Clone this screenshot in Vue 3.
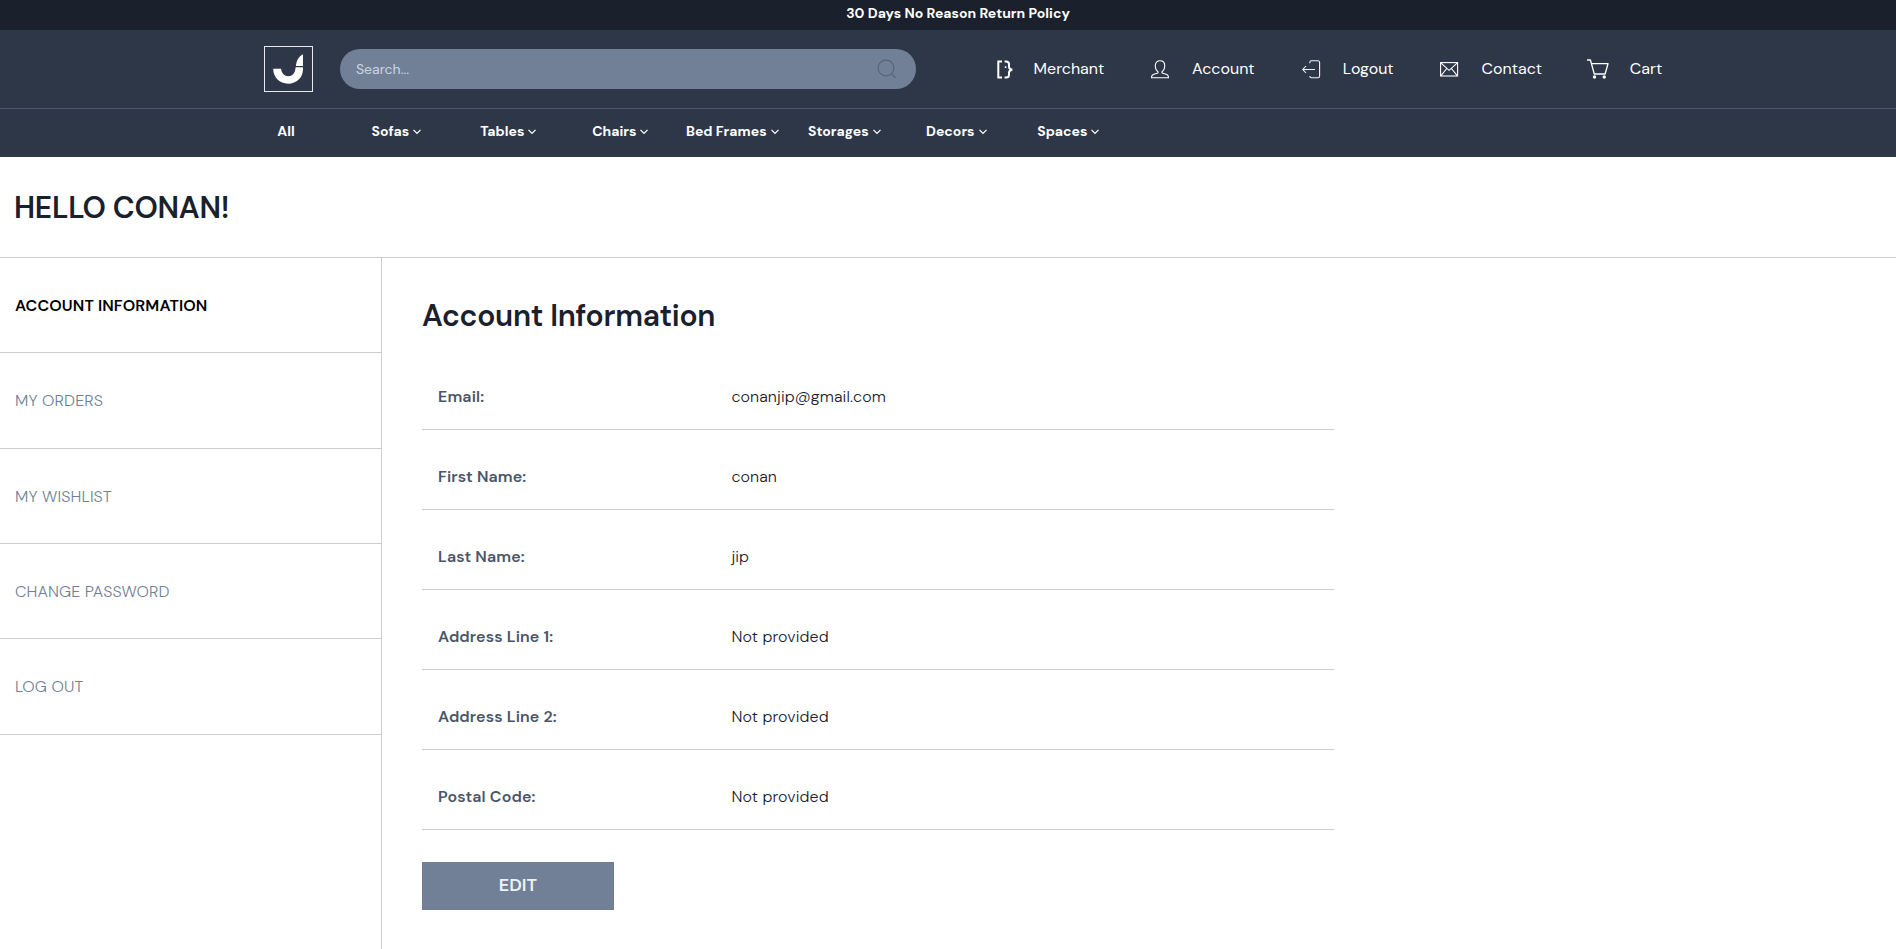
<script setup>
const categories = [
  { name: 'All', menu: false },
  { name: 'Sofas', menu: true },
  { name: 'Tables', menu: true },
  { name: 'Chairs', menu: true },
  { name: 'Bed Frames', menu: true },
  { name: 'Storages', menu: true },
  { name: 'Decors', menu: true },
  { name: 'Spaces', menu: true },
]

const links = [
  { name: 'Merchant', icon: 'merchant' },
  { name: 'Account', icon: 'account' },
  { name: 'Logout', icon: 'logout' },
  { name: 'Contact', icon: 'contact' },
  { name: 'Cart', icon: 'cart' },
]

const sections = [
  { name: 'ACCOUNT INFORMATION', active: true },
  { name: 'MY ORDERS' },
  { name: 'MY WISHLIST' },
  { name: 'CHANGE PASSWORD' },
  { name: 'LOG OUT' },
]

const fields = [
  { label: 'Email:', value: 'conanjip@gmail.com' },
  { label: 'First Name:', value: 'conan' },
  { label: 'Last Name:', value: 'jip' },
  { label: 'Address Line 1:', value: 'Not provided' },
  { label: 'Address Line 2:', value: 'Not provided' },
  { label: 'Postal Code:', value: 'Not provided' },
]
</script>

<template>
  <div class="page">
    <div class="promo">30 Days No Reason Return Policy</div>

    <header class="header">
      <div class="toolbar">
        <svg class="logo" width="49" height="46" viewBox="0 0 49 46">
          <rect x=".5" y=".5" width="48" height="45" fill="none" stroke="#e6e9ee" />
          <path fill="#fff" d="M9.2 22.8H17C17.5 27.3 20.5 30.3 24.3 30.3C28.3 30.3 31.2 27.2 31.6 21.3H39V23C39 31.5 32.6 37.7 24.2 37.7C15.7 37.7 9.2 31.5 9.2 22.8Z" />
          <path fill="#fff" d="M32 20C32.2 14.8 34.3 10.9 39 8.2V20Z" />
        </svg>

        <div class="search">
          <span>Search...</span>
          <svg width="20" height="20" viewBox="0 0 20 20" fill="none" stroke="#566379" stroke-width="1.1">
            <circle cx="9" cy="9" r="7.9" />
            <path d="M14.6 14.7L18.6 18.8" />
          </svg>
        </div>

        <nav class="links">
          <a v-for="link in links" :key="link.name" class="link" :class="link.icon">
            <svg v-if="link.icon === 'merchant'" width="16" height="19" viewBox="0 0 16 19" fill="none" stroke="#fff" stroke-width="2">
              <path d="M5 1.4H1.3V17.6H5" />
              <path d="M7.6 1.4H9Q12 1.4 12 4V6.8Q12 9.4 15.3 9.8Q12 10.2 12 12.8V15Q12 17.6 9 17.6H7.6" />
              <path d="M8.6 6.3V8" stroke-width="1.6" />
            </svg>
            <svg v-else-if="link.icon === 'account'" width="18" height="19" viewBox="0 0 18 19" fill="none" stroke="#fff" stroke-width="1.1" stroke-linejoin="round">
              <path d="M7 11.7C5.2 10.6 4.3 8 4.3 5.6C4.3 2.6 6.2 .8 9 .8S13.7 2.6 13.7 5.6C13.7 8 12.8 10.6 11 11.7V13L15.8 14.5Q17.5 15.1 17.5 17.8H.5Q.5 15.1 2.2 14.5L7 13Z" />
            </svg>
            <svg v-else-if="link.icon === 'logout'" width="19" height="19" viewBox="0 0 19 19" fill="none" stroke="#f1f3f6" stroke-width="1.1">
              <path d="M7.8 3.3V2.5Q7.8 .8 9.5 .8H15.8Q17.6 .8 17.6 2.6V16Q17.6 17.8 15.8 17.8H9.5Q7.8 17.8 7.8 16" />
              <path d="M.8 9.5H13M4 6L.8 9.5L4 13" />
            </svg>
            <svg v-else-if="link.icon === 'contact'" width="19" height="15" viewBox="0 0 19 15" fill="none" stroke="#fff" stroke-width="1.1">
              <rect x=".6" y=".6" width="17" height="13.4" />
              <path d="M.8 .8L9.1 8.3L17.4 .8M.8 13.8L6.8 6.5M17.4 13.8L11.4 6.5" />
            </svg>
            <svg v-else width="22" height="20" viewBox="0 0 22 20" fill="none" stroke="#fff" stroke-width="1.3" stroke-linejoin="round">
              <path d="M0 1H3.4L7.3 15H18.1L21 4.7H4.5" />
              <circle cx="7.5" cy="18" r="1.7" fill="#fff" stroke="none" />
              <circle cx="17.2" cy="18" r="1.7" fill="#fff" stroke="none" />
            </svg>
            <span>{{ link.name }}</span>
          </a>
        </nav>
      </div>

      <nav class="categories">
        <a v-for="item in categories" :key="item.name" class="category">
          <span>{{ item.name }}</span>
          <svg v-if="item.menu" width="8" height="6" viewBox="0 0 8 6" fill="none" stroke="#fff" stroke-width="1.3">
            <path d="M.5 .9L4 4.4L7.5 .9" />
          </svg>
        </a>
      </nav>
    </header>

    <div class="greeting"><h1>HELLO CONAN!</h1></div>

    <div class="body">
      <aside class="sidebar">
        <a v-for="item in sections" :key="item.name" class="section" :class="{ active: item.active }">
          {{ item.name }}
        </a>
      </aside>

      <main class="content">
        <h2>Account Information</h2>
        <dl class="fields">
          <div v-for="field in fields" :key="field.label" class="field">
            <dt>{{ field.label }}</dt>
            <dd>{{ field.value }}</dd>
          </div>
        </dl>
        <button class="edit">EDIT</button>
      </main>
    </div>
  </div>
</template>

<style>
html,
body {
  overflow: hidden;
  background: #fff;
}
</style>

<style scoped>
.page {
  display: flex;
  flex-direction: column;
  height: 949px;
  font-family: "DM Sans", Inter, "Liberation Sans", sans-serif;
  font-size: 16px;
  color: #1a202c;
  white-space: nowrap;
}

.page * {
  box-sizing: border-box;
}

.page svg {
  flex: none;
  display: block;
}

.promo {
  height: 30px;
  padding-left: 20px;
  background: #1a202c;
  color: #fff;
  font-size: 14px;
  font-weight: 700;
  line-height: 27px;
  text-align: center;
}

.header {
  height: 127px;
  background: #2d3748;
  color: #fff;
}

.toolbar {
  display: flex;
  align-items: center;
  height: 79px;
  padding-left: 264px;
  border-bottom: 1px solid #4a5568;
}

.search {
  display: flex;
  align-items: center;
  justify-content: space-between;
  width: 576px;
  height: 40px;
  margin-left: 27px;
  padding: 0 19px 0 16px;
  border-radius: 20px;
  background: #718096;
  color: #cbd5e0;
  font-size: 14px;
}

.links {
  display: flex;
  align-items: center;
}

.link {
  display: flex;
  align-items: center;
  line-height: 20px;
}

.merchant {
  width: 154px;
  margin-left: 81px;
  gap: 20.6px;
}

.account {
  width: 151px;
  gap: 23px;
}

.logout {
  width: 138px;
  gap: 21.8px;
}

.contact {
  width: 147px;
  gap: 22.6px;
}

.cart {
  gap: 20.8px;
}

.categories {
  display: grid;
  grid-template-columns: repeat(8, 112px);
  height: 44px;
  padding-left: 228px;
}

.category {
  display: flex;
  align-items: center;
  justify-content: center;
  gap: 4px;
  padding-left: .6px;
  font-size: 14px;
  font-weight: 700;
}

.category:first-child {
  padding-left: 4px;
}

.category svg {
  margin-top: 2px;
}

.greeting {
  display: flex;
  align-items: center;
  height: 101px;
  padding: 1px 0 0 14px;
  border-bottom: 1px solid #cbcdd1;
}

h1,
h2 {
  margin: 0;
  font-size: 30px;
  font-weight: 600;
  letter-spacing: -.26px;
  line-height: 40px;
}

.body {
  display: flex;
  flex: 1;
}

.sidebar {
  width: 382px;
  border-right: 1px solid #cbcdd1;
}

.section {
  display: flex;
  align-items: center;
  height: 95.33px;
  padding: .4px 0 0 15px;
  border-bottom: 1px solid #cbcdd1;
  color: #718096;
  font-weight: 300;
  letter-spacing: .11px;
}

.active {
  color: #000;
  font-weight: 600;
}

.content {
  padding: 38px 0 0 40px;
}

.fields {
  width: 912px;
  margin: 14px 0 0;
}

.field {
  display: grid;
  grid-template-columns: 293.4px 1fr;
  align-items: center;
  height: 80px;
  padding: 13.6px 0 0 16px;
  border-bottom: 1px solid #cbcdd1;
  letter-spacing: .13px;
}

dt {
  color: #4a5568;
  font-weight: 600;
}

dd {
  margin: 0;
  font-weight: 300;
}

.edit {
  display: block;
  width: 192px;
  height: 48px;
  margin-top: 32px;
  padding: 0 0 3px;
  border: 0;
  background: #718096;
  color: #edf2f7;
  font-family: inherit;
  font-size: 18px;
  font-weight: 600;
}
</style>
